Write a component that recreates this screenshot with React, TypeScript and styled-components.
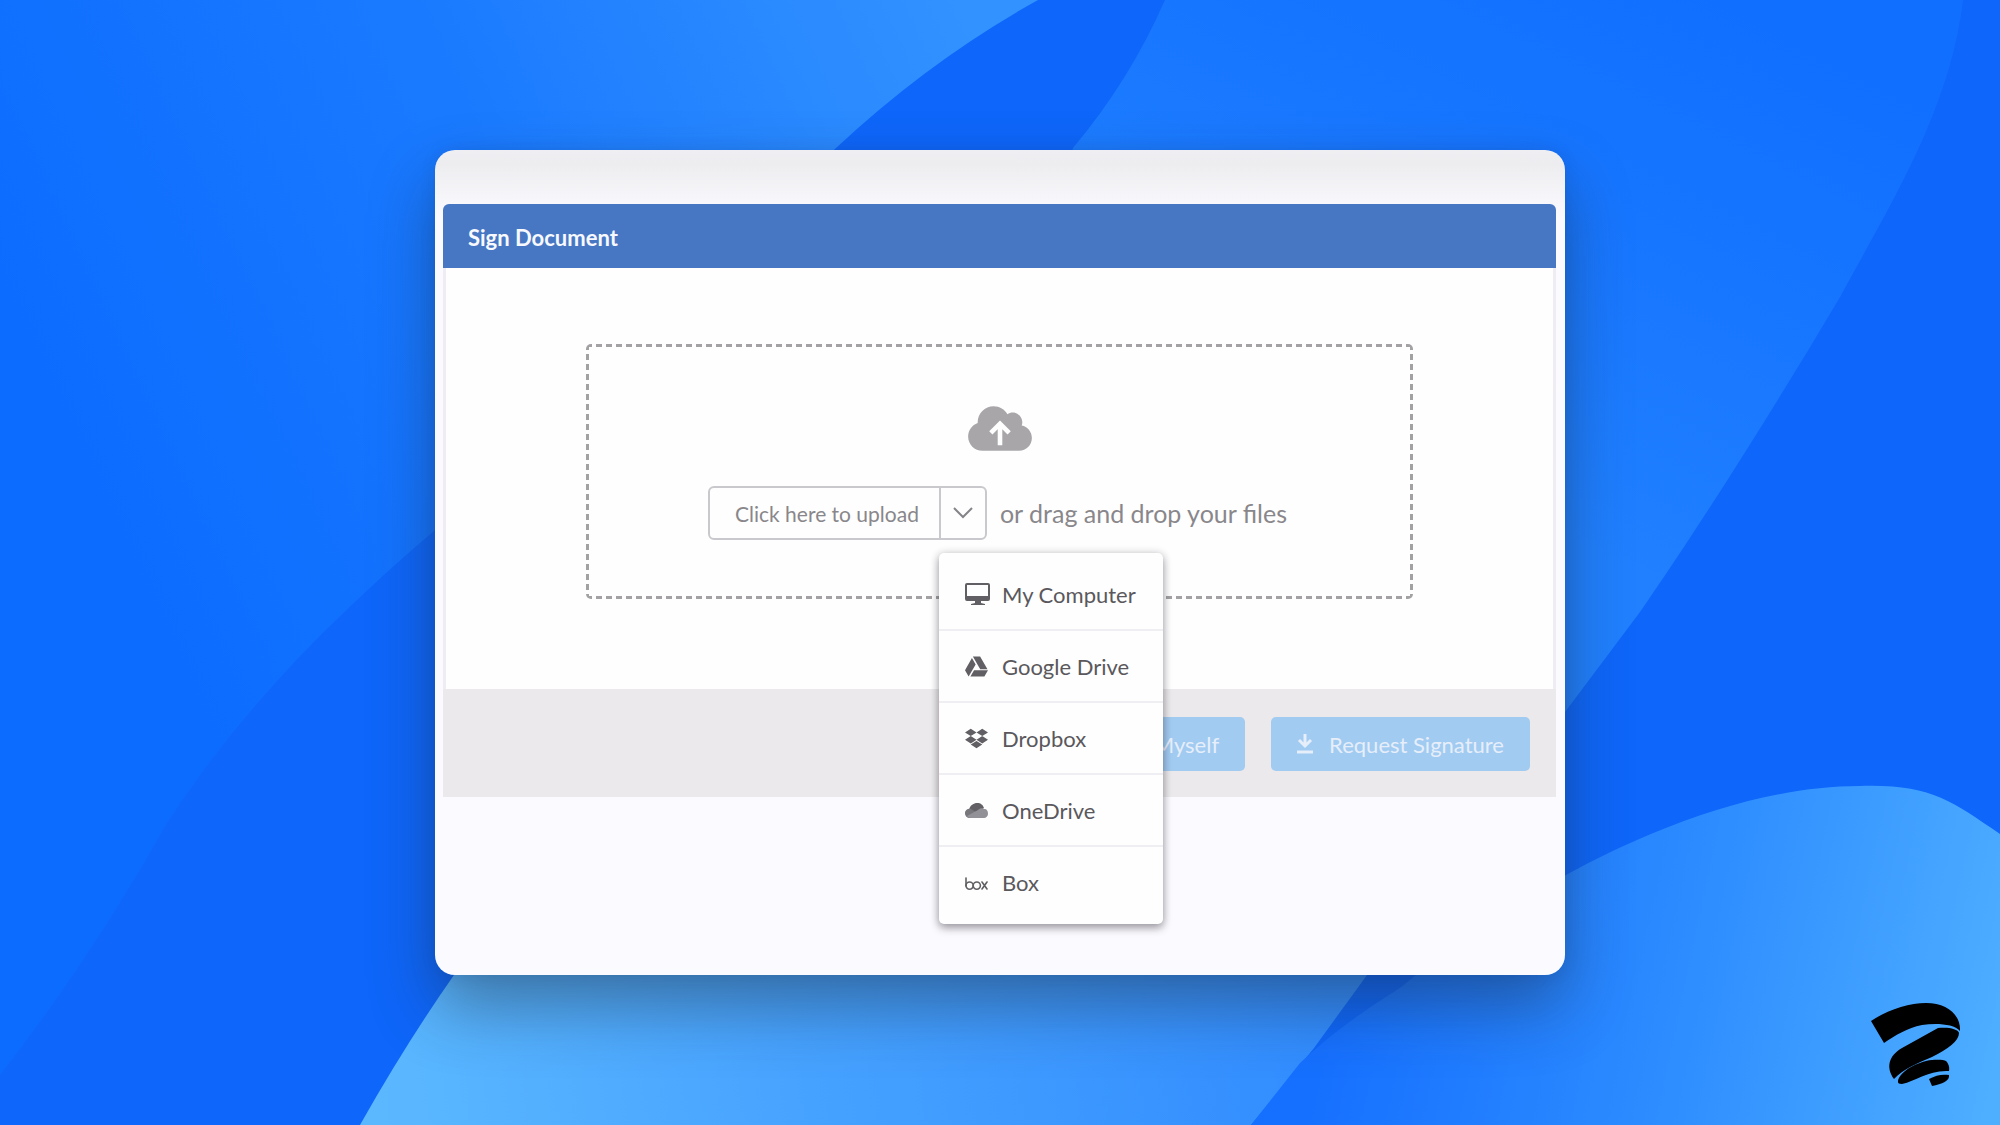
import React from 'react';
import styled, { createGlobalStyle } from 'styled-components';
import { FaGoogleDrive, FaDropbox } from 'react-icons/fa';

const Global = createGlobalStyle`
  * { box-sizing: border-box; }
  body { margin: 0; font-family: Lato, "Open Sans", sans-serif; }
  button { font: inherit; cursor: pointer; }
`;

const Page = styled.main`
  position: relative;
  min-height: 100vh;
  display: flex;
  align-items: center;
  justify-content: center;
  overflow: hidden;
`;

const Backdrop = styled.svg`
  position: absolute;
  inset: 0;
  width: 100%;
  height: 100%;
`;

const BrandMark = styled.svg`
  position: absolute;
  right: 37px;
  bottom: 36px;
  width: 92px;
  height: 86px;
`;

const Window = styled.section`
  position: relative;
  width: 56.5%;
  min-width: 900px;
  padding: 54px 9px 178px 8px;
  border-radius: 20px;
  background: linear-gradient(#efeef2 0, #ededf0 14px, #f8f8fc 54px, #fbfafe 70px);
  box-shadow: 0 32px 64px rgba(30, 40, 50, 0.42), 0 0 16px rgba(20, 40, 90, 0.1);
`;

const Header = styled.header`
  display: flex;
  align-items: center;
  height: 64px;
  padding: 3px 25px 0;
  border-radius: 6px 6px 0 0;
  background: #4776c3;
`;

const Title = styled.h1`
  margin: 0;
  font-size: 22px;
  line-height: 28px;
  font-weight: 700;
  color: #f7f9ff;
`;

const Body = styled.div`
  padding: 76px 140px 90px;
  border: solid #efedf3;
  border-width: 0 3px;
  background: #fefefe;
`;

const DropZone = styled.div`
  display: flex;
  flex-direction: column;
  align-items: center;
  gap: 32px;
  height: 255px;
  padding-top: 59px;
  background:
    repeating-linear-gradient(90deg, #a3a1a4 0 6px, transparent 6px 10px) top / 100% 3px no-repeat,
    repeating-linear-gradient(90deg, #a3a1a4 0 6px, transparent 6px 10px) bottom / 100% 3px no-repeat,
    repeating-linear-gradient(#a3a1a4 0 6px, transparent 6px 10px) left / 3px 100% no-repeat,
    repeating-linear-gradient(#a3a1a4 0 6px, transparent 6px 10px) right / 3px 100% no-repeat;
  border-radius: 5px;
`;

const CloudSvg = styled.svg`
  flex: none;
  width: 64px;
  height: 51px;
`;

const UploadRow = styled.div`
  display: flex;
  align-items: center;
  gap: 13px;
  padding-right: 4px;
`;

const SplitButton = styled.div`
  position: relative;
  display: flex;
  height: 54px;
  border: 2px solid #c9c8cc;
  border-radius: 6px;
`;

const UploadButton = styled.button`
  padding: 0 20px 0 25px;
  border: 0;
  background: none;
  font-size: 21px;
  color: #89878b;
`;

const Toggle = styled.button`
  display: flex;
  align-items: center;
  justify-content: center;
  width: 46px;
  padding: 0;
  border: 0;
  border-left: 2px solid #c9c8cc;
  background: none;
  color: #858388;
`;

const Hint = styled.span`
  font-size: 25px;
  color: #89878b;
`;

const Menu = styled.ul`
  position: absolute;
  z-index: 2;
  top: 65px;
  left: 229px;
  width: 224px;
  margin: 0;
  padding: 6px 0 7px;
  list-style: none;
  border-radius: 5px;
  background: #fefefe;
  box-shadow: 0 4px 8px rgba(40, 35, 45, 0.4), 0 0 8px rgba(40, 35, 60, 0.16);
`;

const MenuRow = styled.li`
  & + & { border-top: 2px solid #efeef2; }
`;

const MenuButton = styled.button`
  display: flex;
  align-items: center;
  gap: 11px;
  width: 100%;
  height: 70px;
  padding: 0 0 0 26px;
  border: 0;
  background: none;
  font-size: 22px;
  color: #5a585c;
`;

const IconSlot = styled.span`
  display: flex;
  flex: none;
  align-items: center;
  width: 26px;
  color: #615f63;
  svg { display: block; flex: none; }
`;

const Footer = styled.footer`
  display: flex;
  align-items: center;
  justify-content: flex-end;
  gap: 26px;
  height: 108px;
  padding: 2px 26px 0;
  background: #ebe9eb;
`;

const ActionButton = styled.button`
  display: flex;
  align-items: center;
  gap: 12px;
  height: 54px;
  padding: 0 26px 0 22px;
  border: 0;
  border-radius: 5px;
  background: #a1cbf1;
  font-size: 22px;
  color: #e6eefa;
`;

const CloudIcon = () => (
  <CloudSvg viewBox="0 0 640 512" aria-hidden="true">
    <path fill="#a8a6a9" d="M537.6 226.6c4.1-10.7 6.4-22.4 6.4-34.6 0-53-43-96-96-96-19.7 0-38.1 6-53.3 16.2C367 64.2 315.3 32 256 32c-88.4 0-160 71.6-160 160 0 2.7.1 5.4.2 8.1C40.2 219.8 0 273.2 0 336c0 79.5 64.5 144 144 144h368c70.7 0 128-57.3 128-128 0-61.9-44-113.6-102.4-125.4z" />
    <path fill="none" stroke="#fefefe" strokeWidth="46" d="M320 425V205M228 300l92-92 92 92" />
  </CloudSvg>
);

const DownloadIcon = () => (
  <svg width="24" height="24" viewBox="0 0 24 24" fill="none" stroke="currentColor" strokeWidth="3" aria-hidden="true">
    <path d="M12 2v12M6 8l6 6 6-6M4 20h16" />
  </svg>
);

const ComputerIcon = () => (
  <svg width="25" height="23" viewBox="0 0 25 23">
    <path fill="currentColor" fillRule="evenodd" d="M2 0h21a2 2 0 0 1 2 2v14a2 2 0 0 1-2 2h-7v2l4 1v1H6v-1l4-1v-2H2a2 2 0 0 1-2-2V2a2 2 0 0 1 2-2Zm0 2v11h21V2Z" />
  </svg>
);

const OneDriveIcon = () => (
  <svg width="23" height="15" viewBox="0 0 23 15">
    <path fill="#626064" d="M4 7C5 2 9 0 12 0c4 0 6 2 7 5l-8 5-9 3C-1 11 0 7 4 7Z" />
    <path fill="#77767b" d="M0 10c0-3 3-5 6-4l13 8-1 1H5c-3 0-5-2-5-5Z" />
    <path fill="#929198" d="m2 13 11-6c2-2 5-2 6-1 3 0 4 2 4 5 0 2-2 4-4 4H5c-1 0-2-1-3-2Z" />
  </svg>
);

const BoxIcon = () => (
  <svg width="23" height="17" viewBox="0 0 23 17" fill="none" stroke="currentColor" strokeWidth="1.6" strokeLinecap="round">
    <path d="M1 4v8" />
    <circle cx="4.6" cy="11.6" r="3.6" />
    <circle cx="11.8" cy="11.6" r="3.6" />
    <path d="m17 8 5 7m0-7-5 7" />
  </svg>
);

const sources = [
  { label: 'My Computer', icon: <ComputerIcon /> },
  { label: 'Google Drive', icon: <FaGoogleDrive size={23} /> },
  { label: 'Dropbox', icon: <FaDropbox size={23} /> },
  { label: 'OneDrive', icon: <OneDriveIcon /> },
  { label: 'Box', icon: <BoxIcon /> },
];

const Wallpaper = () => (
  <Backdrop viewBox="0 0 2000 1125" preserveAspectRatio="none" aria-hidden="true">
    <defs>
      <linearGradient id="left" gradientUnits="userSpaceOnUse" x1="960" y1="0" x2="60" y2="420">
        <stop offset="0" stopColor="#3292ff" />
        <stop offset="0.5" stopColor="#1a7aff" />
        <stop offset="1" stopColor="#0c6cff" />
      </linearGradient>
      <linearGradient id="top" gradientUnits="userSpaceOnUse" x1="1600" y1="560" x2="1850" y2="60">
        <stop offset="0" stopColor="#2080ff" />
        <stop offset="0.5" stopColor="#1877ff" />
        <stop offset="1" stopColor="#106fff" />
      </linearGradient>
      <linearGradient id="pool" gradientUnits="userSpaceOnUse" x1="380" y1="1125" x2="1330" y2="1000">
        <stop offset="0" stopColor="#5bb8ff" />
        <stop offset="0.45" stopColor="#46a2ff" />
        <stop offset="1" stopColor="#318cff" />
      </linearGradient>
      <linearGradient id="hill" gradientUnits="userSpaceOnUse" x1="2000" y1="1100" x2="1340" y2="960">
        <stop offset="0" stopColor="#4fafff" />
        <stop offset="0.5" stopColor="#2d8cff" />
        <stop offset="1" stopColor="#1670ff" />
      </linearGradient>
    </defs>
    <rect width="2000" height="1125" fill="#0e66fa" />
    <path d="M0 0H1038Q930 60 836 148L435 530C330 620 240 710 166 825Q90 960 0 1075Z" fill="url(#left)" />
    <path d="M1165 0H1963C1950 110 1890 205 1840 297C1770 415 1700 525 1640 612L1565 712L1060 200L1073 148Q1130 80 1165 0Z" fill="url(#top)" />
    <path d="M360 1125Q405 1045 454 975H1367L1314 1048L1251 1125Z" fill="url(#pool)" />
    <path d="M1251 1125L1300 1063Q1340 1025 1400 988C1530 880 1710 786 1860 786C1930 784 1950 800 2000 834V1125Z" fill="url(#hill)" />
  </Backdrop>
);

const Ribbon = () => (
  <BrandMark viewBox="0 0 92 86" aria-hidden="true">
    <path d="M0 18C16 7 38 0 55 0c21 0 35 12 34 28C83 21 66 20 51 22 36 25 25 32 13 40Z" />
    <path d="M67 25c11-1 20 1 21 5 0 8-11 16-27 24-14 6-29 12-38 22-8-11-6-23 8-31Z" />
    <path d="M27 79c0-8 13-17 28-21 10-2 18-1 20 0 2 2 4 6 3 10C57 67 45 78 31 81c-3 0-4-1-4-2Z" />
    <path d="M58 76c7-4 13-5 20-4 1 6-7 9-17 11Z" />
  </BrandMark>
);

export default function App() {
  return (
    <Page>
      <Global />
      <Wallpaper />
      <Window>
        <Header><Title>Sign Document</Title></Header>
        <Body>
          <DropZone>
            <CloudIcon />
            <UploadRow>
              <SplitButton>
                <UploadButton type="button">Click here to upload</UploadButton>
                <Toggle type="button" aria-label="Choose a source" aria-expanded="true">
                  <svg width="20" height="12" viewBox="0 0 20 12" fill="none" stroke="currentColor" strokeWidth="2">
                    <path d="m1 1 9 9 9-9" />
                  </svg>
                </Toggle>
                <Menu>
                  {sources.map((s) => (
                    <MenuRow key={s.label}>
                      <MenuButton type="button">
                        <IconSlot>{s.icon}</IconSlot>
                        {s.label}
                      </MenuButton>
                    </MenuRow>
                  ))}
                </Menu>
              </SplitButton>
              <Hint>or drag and drop your files</Hint>
            </UploadRow>
          </DropZone>
        </Body>
        <Footer>
          <ActionButton type="button">Myself</ActionButton>
          <ActionButton type="button"><DownloadIcon />Request Signature</ActionButton>
        </Footer>
      </Window>
      <Ribbon />
    </Page>
  );
}
